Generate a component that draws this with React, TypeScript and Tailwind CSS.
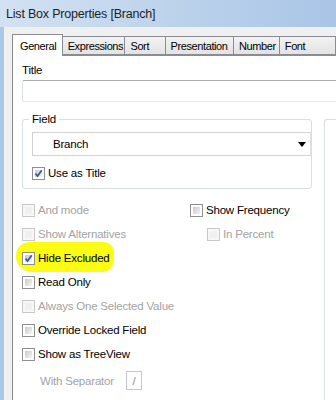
import type { ReactNode } from "react";

const font = { fontFamily: '"Liberation Sans", Arial, sans-serif' };

function Check({ checked = false, disabled = false }: { checked?: boolean; disabled?: boolean }) {
  return (
    <span
      className={
        disabled
          ? "relative flex h-[13px] w-[13px] shrink-0 border border-[#c9c9c9] bg-[#f7f7f7] p-[2px]"
          : "relative flex h-[13px] w-[13px] shrink-0 border border-[#8f8f8f] bg-white p-[2px]"
      }
    >
      <span
        className={
          disabled
            ? "block h-full w-full bg-[#f0f0f0]"
            : "block h-full w-full bg-gradient-to-br from-[#c6cad0] to-[#f4f4f4]"
        }
      />
      {checked && (
        <svg className="absolute left-[1px] top-[1px]" width="9" height="9" viewBox="0 0 9 9">
          <path d="M1.5 4.5 L3.5 7 L7.8 1.2" fill="none" stroke="#3d5a9a" strokeWidth="1.8" />
        </svg>
      )}
    </span>
  );
}

function Option({
  label,
  checked,
  disabled,
}: {
  label: string;
  checked?: boolean;
  disabled?: boolean;
}) {
  return (
    <div className="flex h-[24px] items-center gap-[3px]">
      <Check checked={checked} disabled={disabled} />
      <span className={disabled ? "text-[#a3a3a3]" : "text-black"}>{label}</span>
    </div>
  );
}

function Tab({ children, active, w }: { children: ReactNode; active?: boolean; w: string }) {
  if (active) {
    return (
      <div
        className={`${w} relative z-10 -mb-[1px] flex h-[22px] items-center border border-b-0 border-[#898c95] bg-white pl-[7px]`}
      >
        {children}
      </div>
    );
  }
  return (
    <div
      className={`${w} -ml-[1px] flex h-[19px] items-center border border-[#898c95] bg-gradient-to-b from-[#f2f2f2] to-[#e3e3e3] pl-[5px]`}
    >
      {children}
    </div>
  );
}

export default function App() {
  return (
    <div
      className="h-[400px] w-[336px] overflow-hidden bg-[#a9c8ea] text-[11.5px] leading-[16px] tracking-[-0.2px]"
      style={font}
    >
      <div className="flex h-[27px] items-center bg-gradient-to-r from-[#d3e2f2] via-[#bdd3ec] to-[#a9c5e6] pl-[6px] text-[12.5px] text-[#1e1e1e]">
        List Box Properties [Branch]
      </div>
      <div className="ml-[4px] h-[373px] bg-[#f0f0f0] pl-[8px] pt-[7px]">
        <div className="flex items-end text-[11px] tracking-[-0.4px]">
          <Tab active w="w-[53px]">General</Tab>
          <Tab w="w-[67px]">Expressions</Tab>
          <Tab w="w-[43px]">Sort</Tab>
          <Tab w="w-[73px]">Presentation</Tab>
          <Tab w="w-[49px]">Number</Tab>
          <Tab w="w-[60px]">Font</Tab>
        </div>
        <div className="h-[360px] w-[340px] border-l border-t border-[#898c95] bg-white pl-[9px] pt-[6px]">
          <div className="h-[16px]">Title</div>
          <div className="mt-[2px] h-[22px] w-[330px] rounded-[2px] border border-[#abadb3] border-l-[#dbdfe6] border-r-[#dbdfe6] border-b-[#e3e9ef]" />
          <div className="mt-[17px] flex">
            <div className="w-[300px]">
              <div className="relative h-[70px] rounded-[3px] border border-[#d5dfe5] pl-[9px] pt-[12px]">
                <span className="absolute -top-[9px] left-[6px] bg-white px-[3px]">Field</span>
                <div className="flex h-[24px] w-[279px] items-center justify-between border border-[#d2d2d2] border-r-[#e2e3ea] pl-[20px] pr-[4px]">
                  <span>Branch</span>
                  <svg width="8" height="5" viewBox="0 0 8 5">
                    <path d="M0 0 H8 L4 5 Z" fill="#000" />
                  </svg>
                </div>
                <div className="mt-[5px]">
                  <Option label="Use as Title" checked />
                </div>
              </div>
              <div className="mt-[9px] grid grid-cols-[168px_1fr]">
                <Option label="And mode" disabled />
                <Option label="Show Frequency" />
                <Option label="Show Alternatives" disabled />
                <div className="pl-[17px]">
                  <Option label="In Percent" disabled />
                </div>
              </div>
              <div className="relative">
                <div className="absolute -left-[6px] -top-[4px] h-[30px] w-[98px] rounded-[14px_10px_12px_16px] bg-[#fbfb13]" />
                <div className="relative">
                  <Option label="Hide Excluded" checked />
                </div>
              </div>
              <Option label="Read Only" />
              <Option label="Always One Selected Value" disabled />
              <Option label="Override Locked Field" />
              <Option label="Show as TreeView" />
              <div className="mt-[5px] flex h-[19px] items-center pl-[18px] text-[#a3a3a3]">
                <span className="w-[86px]">With Separator</span>
                <div className="flex h-[19px] w-[16px] items-center justify-center border border-[#c2c5cc] text-[#8a8a8a]">
                  /
                </div>
              </div>
            </div>
            <div className="ml-[12px] h-[290px] w-[40px] rounded-tl-[3px] border-l border-t border-[#d5dfe5]" />
          </div>
        </div>
      </div>
    </div>
  );
}
